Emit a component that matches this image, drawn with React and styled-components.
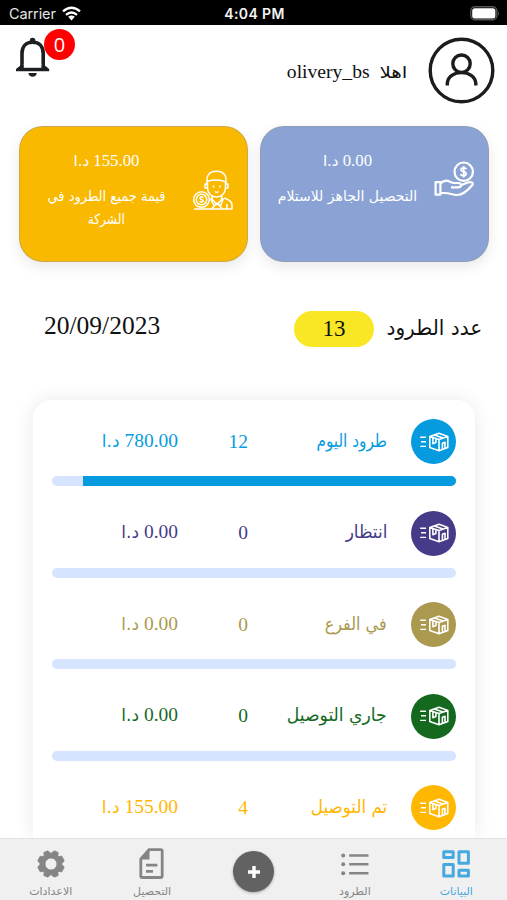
import React from "react";
import styled, { createGlobalStyle } from "styled-components";

const GlobalStyle = createGlobalStyle`
  * { box-sizing: border-box; }
  body { margin: 0; background: #fff; overflow: hidden; }
  svg { display: block; flex: none; }
`;

const Screen = styled.div`
  width: 507px;
  height: 900px;
  display: flex;
  flex-direction: column;
  overflow: hidden;
  background: #fff;
  color: #111;
  font-family: "Liberation Serif", "DejaVu Sans", serif;
`;

const StatusBar = styled.div`
  flex: none;
  height: 25px;
  padding: 2px 7px 0 9px;
  background: #000;
  color: #e4e4e4;
  display: grid;
  grid-template-columns: 1fr auto 1fr;
  align-items: center;
  direction: ltr;
  font: 14.5px/22px Inter, sans-serif;
`;
const Carrier = styled.div`
  display: flex;
  align-items: center;
  gap: 6px;
  letter-spacing: -0.1px;
`;
const Clock = styled.div`
  font-weight: 600;
  font-size: 14px;
  letter-spacing: 0.4px;
  color: #f4f4f4;
`;
const BatterySlot = styled.div`
  justify-self: end;
`;

const Header = styled.header`
  flex: none;
  height: 101px;
  padding: 12px 12px 0 15px;
  display: flex;
  align-items: flex-start;
`;
const Greeting = styled.div`
  flex: 1;
  margin: 20px 21px 0 0;
  display: flex;
  gap: 15px;
  align-items: baseline;
  font-size: 19.6px;
  line-height: 30px;
`;
const BellWrap = styled.div`
  position: relative;
  width: 36px;
  height: 42px;
`;
const Badge = styled.span`
  position: absolute;
  left: 29px;
  top: -8px;
  width: 31px;
  height: 31px;
  border-radius: 50%;
  background: #fe0000;
  color: #fff;
  font: 20px/31px "Open Sans", sans-serif;
  text-align: center;
`;

const Arabic = styled.span`
  display: inline-block;
  white-space: nowrap;
  font-family: "DejaVu Sans", sans-serif;
  font-size: ${(p) => p.$size}px;
  transform: scaleX(${(p) => p.$stretch || 1});
  transform-origin: ${(p) => p.$origin || "right"} center;
`;

const Cards = styled.section`
  flex: none;
  display: flex;
  justify-content: space-between;
  padding: 0 18px 0 19px;
`;
const Card = styled.article`
  width: 229px;
  height: 136px;
  padding: 22px 14px 0 0;
  border-radius: 24px;
  border: 1px solid rgba(150, 150, 150, 0.45);
  background: ${(p) => p.$color};
  box-shadow: 0 5px 14px rgba(0, 0, 0, 0.09);
  color: #fff;
  display: flex;
`;
const CardIcon = styled.div`
  padding-top: ${(p) => p.$top}px;
`;
const CardText = styled.div`
  width: 173px;
  text-align: center;
  font-size: 16.8px;
`;
const CardAmount = styled.div`
  line-height: 24px;
  margin-bottom: 12px;
`;
const CardLabel = styled.div`
  line-height: 23px;
  display: flex;
  flex-direction: column;
  align-items: center;
`;

const Summary = styled.section`
  flex: none;
  height: 36px;
  margin-top: 49px;
  padding: 0 25px 0 44px;
  display: flex;
  align-items: center;
`;
const SummaryTitle = styled.div`
  width: 95px;
  line-height: 34px;
`;
const Pill = styled.div`
  width: 80px;
  height: 36px;
  margin-right: 13px;
  border-radius: 18px;
  background: #f9e725;
  text-align: center;
  font-size: 23px;
  line-height: 35px;
`;
const DateText = styled.div`
  margin-right: auto;
  font-size: 25.5px;
  line-height: 32px;
  padding-bottom: 7px;
`;

const Panel = styled.section`
  flex: 1;
  min-height: 0;
  margin: 53px 32px 0 33px;
  padding: 19px 19px 0;
  overflow: hidden;
  clip-path: inset(-20px -32px 0 -33px);
  border-radius: 18px 18px 0 0;
  background: #fff;
  box-shadow: 0 0 20px rgba(0, 0, 0, 0.09);
`;
const Entry = styled.div`
  height: 91.6px;
  color: ${(p) => p.$color};
`;
const EntryLine = styled.div`
  height: 45px;
  display: flex;
  align-items: center;
  font-size: 19.5px;
  line-height: 30px;
`;
const Disc = styled.div`
  width: 45px;
  height: 45px;
  margin-left: 24px;
  border-radius: 50%;
  background: ${(p) => p.$color};
  display: grid;
  place-items: center;
`;
const EntryName = styled.div`
  width: 111px;
  padding-bottom: 2px;
`;
const EntryCount = styled.div`
  width: 98px;
  padding-right: 28px;
  text-align: left;
  margin-left: 0;
`;
const CountValue = styled.div`
  text-align: right;
`;
const EntryAmount = styled.div`
  white-space: nowrap;
  padding-bottom: 2px;
`;
const Track = styled.div`
  height: 10px;
  margin-top: 12px;
  border-radius: 5px;
  background: #d6e4ff;
  overflow: hidden;
`;
const Fill = styled.div`
  height: 100%;
  background: currentColor;
`;

const TabBar = styled.nav`
  flex: none;
  height: 62px;
  background: #f1f0f1;
  border-top: 1px solid #e2e2e2;
  display: grid;
  grid-template-columns: repeat(5, 1fr);
`;
const Tab = styled.div`
  display: flex;
  flex-direction: column;
  align-items: center;
  padding-top: 9px;
  color: ${(p) => (p.$active ? "#45a9df" : "#858585")};
`;
const TabIcon = styled.div`
  height: 34px;
  padding-top: ${(p) => p.$top || 0}px;
`;
const TabLabel = styled.div`
  height: 18px;
  line-height: 16px;
`;
const AddButton = styled.div`
  width: 41px;
  height: 41px;
  margin-top: 3px;
  border-radius: 50%;
  background: #626262;
  box-shadow: 0 1px 3px rgba(0, 0, 0, 0.3);
  display: grid;
  place-items: center;
`;

const Wifi = () => (
  <svg width="19" height="15" viewBox="0 0 19 15" fill="none" stroke="#fff" strokeWidth="2.4">
    <path d="M1 5.4Q9.5-1.8 18 5.4M4 8.8Q9.5 4.2 15 8.8" />
    <path d="M6.2 10.8Q9.5 8.4 12.8 10.8L9.5 14.4Z" fill="#fff" stroke="none" />
  </svg>
);
const Battery = () => (
  <svg width="30" height="15" viewBox="0 0 30 15">
    <rect x=".8" y=".8" width="26" height="13" rx="4" fill="none" stroke="#555" strokeWidth="1.4" />
    <rect x="2.2" y="2.2" width="23.2" height="10.2" rx="2.5" fill="#fff" />
    <path d="M28 5q2 2.5 0 5z" fill="#555" />
  </svg>
);
const Bell = () => (
  <svg width="36" height="42" viewBox="0 0 36 42" fill="none" stroke="#1d2022" strokeWidth="3.6">
    <path d="M7 31V16.5C7 9 11.5 5.3 17.6 5.3S28.2 9 28.2 16.5V31" />
    <path d="M1 34.2V32L6 28h23.2l5 4v2.2z" fill="#1d2022" stroke="none" />
    <path d="M8.8 27h17.6v3.8H8.8z" fill="#fff" stroke="none" />
    <path d="M14.8 5V3.6a2.8 2.8 0 0 1 5.6 0V5zM13.4 36h8.4q-.6 3.8-4.2 3.8T13.4 36" fill="#1d2022" stroke="none" />
  </svg>
);
const Avatar = () => (
  <svg width="67" height="67" viewBox="0 0 67 67" fill="none" stroke="#1c1c1e" strokeWidth="3.4">
    <circle cx="33.5" cy="33.5" r="31.3" />
    <circle cx="33.5" cy="26.7" r="8.7" />
    <path d="M19.3 48.5V46C20 39.5 26 35.6 33.5 35.6S47 39.5 47.8 46v2.5" />
  </svg>
);
const HandCoin = () => (
  <svg width="40" height="36" viewBox="0 0 40 36" fill="none" stroke="#fff" strokeWidth="2.2" strokeLinejoin="round">
    <circle cx="29.7" cy="10.7" r="9.2" />
    <path d="M32.5 8Q31.5 6.7 29.5 6.8C26.3 7 26.3 10.1 29.5 10.6S33.1 14.5 29.8 14.7Q27.5 14.7 26.5 13.2M29.7 5v11.5" strokeWidth="1.8" />
    <path d="M1.6 21.2h4.8v12.5H1.6zM6.4 22.5C9.5 19.5 12.5 18.4 16 20.8q2 1.2 4.5 1.2h3.5c4 0 4 4.4 0 4.4h-7M26.8 24.2l7-2.7c3.8-1.2 6.2.4 4.3 2.8C33 30.5 28.3 34 23 34c-4.6 0-7.3-2-12.3-2H6.4" />
  </svg>
);
const Courier = () => (
  <svg width="40" height="40" viewBox="0 0 40 40" fill="none" stroke="#fff" strokeWidth="1.5" strokeLinejoin="round">
    <path d="M14 15V10C14 4.5 17.5 1.2 23.5 1.2S33 4.5 33 10v5M14 11.5Q24 8.5 33 12M14.5 12.5v5.2c0 5.5 4 9.3 9 9.3s9-3.8 9-9.3v-5M14 14h-2v4h2.5M33 14h2v4h-2.4" />
    <path d="M20.5 15.5v2M27 15.5v2M22 21.5q1.8 1.4 3.6 0M19.2 25.8v3.4l4.8 5.5 4.7-5.5v-3.4M19 28l-1.3 1.2 3.3 6.3 3-2.5 3.7 2.5 2.5-6.5-1.5-1.3M31 28c5 1.5 8 3.5 8 7.2V39H1M33.8 34v4.6M19 38.5l5-5.5 5 5.5" />
    <circle cx="8.5" cy="29.5" r="7.8" />
    <circle cx="8.5" cy="29.5" r="5.2" />
    <path d="M10.5 27.6c-3-2-5.2 1-2 1.9s2 3.6-2 2" />
  </svg>
);
const Parcel = () => (
  <svg width="30" height="20" viewBox="0 0 30 20" fill="none" stroke="#fff" strokeWidth="1.6" strokeLinejoin="round">
    <path d="M1.2 5.2h5.8M2 9.8h5M1.2 14.4h5.8" strokeWidth="1.4" />
    <path d="M10.8 4.4 20 1.2l8.8 3.2v11L20 18.7l-9.2-3.3zL20 7.5l8.8-3.1M20 7.5v11.2M15.3 2.9l8.8 3.2M13.9 6v5.8l3-1.2V7M23.4 17V11.3l2.6-1v5.6" />
  </svg>
);
const Dashboard = () => (
  <svg width="28" height="28" viewBox="0 0 28 28" fill="none" stroke="currentColor" strokeWidth="3" strokeLinejoin="round">
    <path d="M1.8 1.8h9.4v5.6H1.8zM17 1.8h9.4v11.4H17zM1.8 14.5h9.4v11.4H1.8zM17 20.3h9.4v5.6H17z" />
  </svg>
);
const ListIcon = () => (
  <svg width="28" height="28" viewBox="0 0 28 28" fill="currentColor">
    <path d="M8.2 4.2h19.3v2.6H8.2zM8.2 13h19.3v2.6H8.2zM8.2 21.9h19.3v2.6H8.2z" />
    <circle cx="2.2" cy="5.5" r="2" />
    <circle cx="2.2" cy="14.3" r="2" />
    <circle cx="2.2" cy="23.2" r="2" />
  </svg>
);
const Invoice = () => (
  <svg width="28" height="32" viewBox="0 0 28 32" fill="none" stroke="currentColor" strokeWidth="2.8">
    <path d="M11 1.7h11.8q1.4 0 1.4 1.4v25q0 1.4-1.4 1.4H4.2q-1.4 0-1.4-1.4V11z" />
    <path d="M11.5 1v10.5H2.7z" fill="currentColor" stroke="none" />
    <path d="M8 17.2h11.4M8 23.3h7" />
  </svg>
);
const Gear = () => (
  <svg width="28" height="28" viewBox="0 0 28 28">
    <path
      fill="currentColor"
      fillRule="evenodd"
      d="M10.8.8 14 3.4 17.2.8l4 1.7-.4 4.1 4.1-.4L27.2 10.8 24.6 14l2.6 3.2-2.3 4.6-4.1-.4.4 4.1-4 1.7L14 24.6l-3.2 2.6-4-1.7.4-4.1-4.1.4L.8 17.2 3.4 14 .8 10.8 3.1 6.2l4.1.4-.4-4.1zM14 8a6 6 0 1 0 0 12a6 6 0 0 0 0-12z"
      stroke="currentColor"
      strokeWidth=".8"
      strokeLinejoin="round"
    />
  </svg>
);
const Plus = () => (
  <svg width="14" height="14" viewBox="0 0 14 14" stroke="#fff" strokeWidth="3.4">
    <path d="M7 1v12M1 7h12" />
  </svg>
);

const entries = [
  { name: "طرود اليوم", stretch: 0.85, count: 12, amount: "780.00", color: "#069bde", progress: 92.3 },
  { name: "انتظار", stretch: 0.94, count: 0, amount: "0.00", color: "#463b88", progress: 0 },
  { name: "في الفرع", stretch: 0.89, count: 0, amount: "0.00", color: "#ac9950", progress: 0 },
  { name: "جاري التوصيل", stretch: 0.955, count: 0, amount: "0.00", color: "#15691f", progress: 0 },
  { name: "تم التوصيل", stretch: 0.93, count: 4, amount: "155.00", color: "#ffb700", progress: 31 },
];

const tabs = [
  { label: "البيانات", Icon: Dashboard, active: true, top: 2 },
  { label: "الطرود", Icon: ListIcon, top: 2 },
  null,
  { label: "التحصيل", Icon: Invoice },
  { label: "الاعدادات", Icon: Gear, top: 2 },
];

const Money = ({ value, size }) => (
  <>
    {value} <Arabic $size={size}>د.ا</Arabic>
  </>
);

export default function App() {
  return (
    <Screen dir="rtl">
      <GlobalStyle />
      <StatusBar>
        <Carrier>Carrier <Wifi /></Carrier>
        <Clock>4:04 PM</Clock>
        <BatterySlot><Battery /></BatterySlot>
      </StatusBar>
      <Header>
        <Avatar />
        <Greeting>
          <Arabic $size={16} $stretch={1.25}>اهلا</Arabic>
          <span>olivery_bs</span>
        </Greeting>
        <BellWrap><Bell /><Badge>0</Badge></BellWrap>
      </Header>
      <Cards>
        <Card $color="#8aa3d4">
          <CardIcon $top={12}><HandCoin /></CardIcon>
          <CardText>
            <CardAmount><Money value="0.00" size={15} /></CardAmount>
            <CardLabel><Arabic $size={14} $origin="center">التحصيل الجاهز للاستلام</Arabic></CardLabel>
          </CardText>
        </Card>
        <Card $color="#f8b900">
          <CardIcon $top={21}><Courier /></CardIcon>
          <CardText>
            <CardAmount><Money value="155.00" size={15} /></CardAmount>
            <CardLabel>
              <Arabic $size={14} $stretch={0.93} $origin="center">قيمة جميع الطرود في</Arabic>
              <Arabic $size={14} $stretch={0.87} $origin="center">الشركة</Arabic>
            </CardLabel>
          </CardText>
        </Card>
      </Cards>
      <Summary>
        <SummaryTitle><Arabic $size={21} $stretch={0.955}>عدد الطرود</Arabic></SummaryTitle>
        <Pill>13</Pill>
        <DateText>20/09/2023</DateText>
      </Summary>
      <Panel>
        {entries.map((e) => (
          <Entry key={e.name} $color={e.color}>
            <EntryLine>
              <Disc $color={e.color}><Parcel /></Disc>
              <EntryName><Arabic $size={18} $stretch={e.stretch}>{e.name}</Arabic></EntryName>
              <EntryCount><CountValue>{e.count}</CountValue></EntryCount>
              <EntryAmount><Money value={e.amount} size={17} /></EntryAmount>
            </EntryLine>
            <Track><Fill style={{ width: `${e.progress}%` }} /></Track>
          </Entry>
        ))}
      </Panel>
      <TabBar>
        {tabs.map((t) =>
          t ? (
            <Tab key={t.label} $active={t.active}>
              <TabIcon $top={t.top}><t.Icon /></TabIcon>
              <TabLabel><Arabic $size={11} $origin="center">{t.label}</Arabic></TabLabel>
            </Tab>
          ) : (
            <Tab key="add"><AddButton><Plus /></AddButton></Tab>
          )
        )}
      </TabBar>
    </Screen>
  );
}
